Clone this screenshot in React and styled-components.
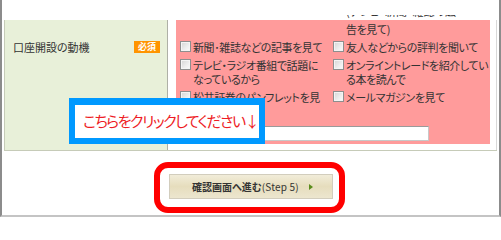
import React from "react";
import styled, { createGlobalStyle } from "styled-components";

const Global = createGlobalStyle`
  html, body { margin: 0; padding: 0; background: #fff; }
  body {
    font-family: "Noto Sans CJK JP", "Noto Sans", sans-serif;
    font-feature-settings: "palt";
    color: #333;
  }
  * { box-sizing: border-box; }
`;

const Frame = styled.div`
  position: relative;
  width: 501px;
  height: 217px;
  border-left: 2px solid #8c8c8c;
  border-right: 2px solid #8c8c8c;
  border-bottom: 2px solid #c4c4c4;
  overflow: hidden;
`;

const TopStrip = styled.div`
  height: 20px;
  padding-top: 15px;
`;

const FragmentClip = styled.div`
  height: 5px;
  margin-left: 344px;
  overflow: hidden;
`;

const FragmentText = styled.div`
  margin-top: -11px;
  font-size: 11px;
  line-height: 14px;
  white-space: nowrap;
`;

const FormTable = styled.div`
  display: grid;
  grid-template-columns: 164px 329px;
  margin: 0 2px;
  height: 131px;
  border-bottom: 1px solid #c6cbb8;
`;

const LabelCell = styled.div`
  display: flex;
  align-items: flex-start;
  justify-content: space-between;
  background: #e8f0d9;
  border-left: 1px solid #c6cbb8;
  border-right: 1px solid #aeb0a6;
  padding: 20px 7px 0 8px;
  font-size: 11px;
  line-height: 14px;
`;

const Badge = styled.span`
  display: inline-flex;
  align-items: center;
  justify-content: center;
  width: 26px;
  height: 12px;
  margin-top: 1px;
  background: #ff9400;
  color: #fff;
  font-size: 9px;
  font-weight: bold;
  line-height: 12px;
`;

const FieldCell = styled.div`
  background: #fff;
  border-right: 1px solid #d8d8d8;
  padding: 0 6px 6px 8px;
`;

const PinkBox = styled.div`
  background: #ff9b9b;
  height: 124px;
  padding: 2px 0 0 4px;
  overflow: hidden;
`;

const OptionGrid = styled.div`
  display: grid;
  grid-template-columns: 153px 1fr;
  row-gap: 4px;
  font-size: 11px;
  line-height: 14px;
  letter-spacing: -0.4px;
`;

const Option = styled.div`
  display: flex;
  align-items: flex-start;
  gap: 2px;
  white-space: nowrap;
`;

const Continuation = styled.div`
  padding-left: 13px;
`;

const Check = styled.span`
  flex: none;
  width: 11px;
  height: 11px;
  margin-top: 1px;
  border: 1px solid #8e8e8e;
  background: linear-gradient(135deg, #d4d4d4 0%, #eeeeee 60%, #fbfbfb 100%);
  box-shadow: inset 0 0 0 1px #f4f4f4;
`;

const OtherInput = styled.div`
  width: 249px;
  height: 15px;
  margin-top: 8px;
  background: #fff;
  border: 1px solid #c8c8c8;
  border-top-color: #9a9a9a;
`;

const Actions = styled.div`
  display: flex;
  justify-content: center;
  padding-top: 11px;
  padding-right: 2px;
`;

const Highlight = styled.div`
  border: 6px solid #ff0000;
  border-radius: 14px;
  padding: 6px 6px 8px 9px;
`;

const SubmitButton = styled.div`
  display: flex;
  align-items: center;
  gap: 10px;
  width: 164px;
  height: 25px;
  padding-left: 22px;
  border: 1px solid #d2cdbd;
  background: linear-gradient(#f1ecd9 0%, #e6ddbd 50%, #ece6cf 100%);
  color: #333;
  font-size: 10px;
  font-weight: bold;
  white-space: nowrap;
`;

const StepText = styled.span`
  font-weight: normal;
  letter-spacing: 0.2px;
`;

const Arrow = styled.span`
  width: 0;
  height: 0;
  border-top: 3px solid transparent;
  border-bottom: 3px solid transparent;
  border-left: 4px solid #5a8c1c;
`;

const Callout = styled.div`
  position: absolute;
  left: 67px;
  top: 98px;
  width: 196px;
  height: 46px;
  border: 6px solid #0099ff;
  border-top-width: 7px;
  background: #fff;
  display: flex;
  align-items: center;
  padding-left: 8px;
  padding-bottom: 2px;
  color: #ee1c25;
  font-size: 15px;
  white-space: nowrap;
  letter-spacing: -1.5px;
`;

export default function App() {
  return (
    <>
      <Global />
      <Frame>
        <TopStrip>
          <FragmentClip>
            <FragmentText>(テレビ・新聞・雑誌の広</FragmentText>
          </FragmentClip>
        </TopStrip>
        <FormTable>
          <LabelCell>
            <span>口座開設の動機</span>
            <Badge>必須</Badge>
          </LabelCell>
          <FieldCell>
            <PinkBox>
              <OptionGrid>
                <div />
                <Continuation>告を見て)</Continuation>
                <Option>
                  <Check />
                  <span>新聞･雑誌などの記事を見て</span>
                </Option>
                <Option>
                  <Check />
                  <span>友人などからの評判を聞いて</span>
                </Option>
                <Option>
                  <Check />
                  <span>
                    テレビ・ラジオ番組で話題に
                    <br />
                    なっているから
                  </span>
                </Option>
                <Option>
                  <Check />
                  <span>
                    オンライントレードを紹介してい
                    <br />
                    る本を読んで
                  </span>
                </Option>
                <Option>
                  <Check />
                  <span>
                    松井証券のパンフレットを見
                    <br />て
                  </span>
                </Option>
                <Option>
                  <Check />
                  <span>メールマガジンを見て</span>
                </Option>
              </OptionGrid>
              <OtherInput />
            </PinkBox>
          </FieldCell>
        </FormTable>
        <Actions>
          <Highlight>
            <SubmitButton>
              <span>
                確認画面へ進む<StepText>(Step 5)</StepText>
              </span>
              <Arrow />
            </SubmitButton>
          </Highlight>
        </Actions>
        <Callout>こちらをクリックしてください↓</Callout>
      </Frame>
    </>
  );
}
